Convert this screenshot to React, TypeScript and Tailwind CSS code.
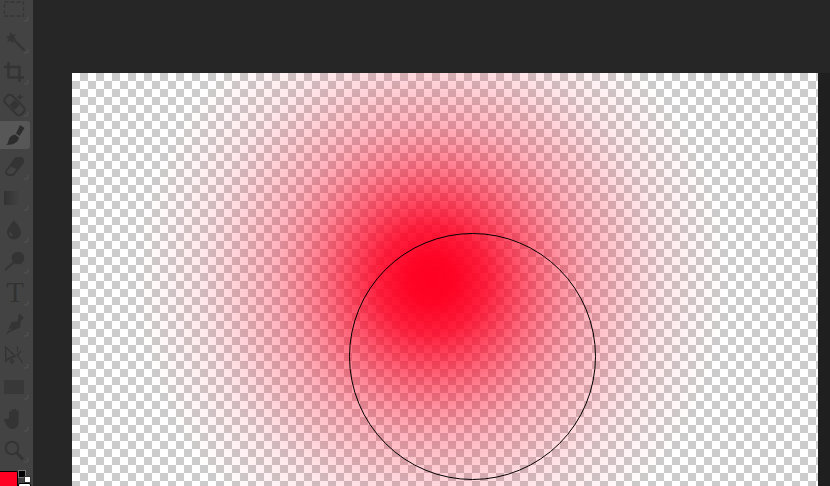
import type { ReactNode } from 'react';

const ICON = '#343434';

// corner flyout mark under each tool
function Tool({ active, children }: { active?: boolean; children: ReactNode }) {
  return (
    <div className="h-[31.5px] shrink-0 flex items-center">
      <div className={active ? 'w-[30px] h-7 rounded-r-[3px] bg-[#575757]' : 'w-[30px] h-7'}>
        <svg viewBox="0 0 30 28" width="30" height="28" className="block">
          {children}
          <path d="M28 22v2a2 2 0 0 1-2 2h-2" fill="none" stroke="#555555" strokeWidth="1" />
        </svg>
      </div>
    </div>
  );
}

export default function App() {
  return (
    <div className="flex w-[830px] h-[486px] overflow-hidden bg-[#262626]">
      {/* toolbar */}
      <div className="w-[33px] shrink-0 bg-[#434343] flex flex-col -mt-[6.75px] h-[493px]">
        <Tool>
          <rect x="4.5" y="7" width="19" height="14" fill="none" stroke="#363636" strokeWidth="1.3" strokeDasharray="4 2" />
        </Tool>
        <Tool>
          <path d="M11 4.500l1.200 3.600 3.600-1-1.900 3.200 2.800 2-3.600.4-.2 3.500-2.400-2.700-3.200 1.500 1.300-3.400-3-2.100 3.600-.3z" fill={ICON} />
          <path d="M14 13l10.500 10.500" stroke={ICON} strokeWidth="2" />
        </Tool>
        <Tool>
          <path d="M8.500 4v15.500H24M4 9h15.500v15" fill="none" stroke={ICON} strokeWidth="2.400" />
        </Tool>
        <Tool>
          <rect x="3" y="10" width="23" height="10" rx="3.500" transform="rotate(45 14.500 15)" fill="none" stroke={ICON} strokeWidth="2" />
          <rect x="11" y="11.500" width="7" height="7" transform="rotate(45 14.500 15)" fill={ICON} />
          <path d="M20 3.500l1 2.500 2.500 1-2.500 1-1 2.500-1-2.500-2.500-1 2.500-1z" fill={ICON} />
        </Tool>
        <Tool active>
          <path d="M20 4l4.500 3-5 8-3.500-2.500z" fill="#2c2c2c" />
          <path d="M15 13.500l4 3c-.5 4-4.500 7.500-13 7.500 3-2 2-4.500 3.500-7 1-1.700 3.500-3 5.500-3.500z" fill="#2c2c2c" />
        </Tool>
        <Tool>
          <path d="M17 5h3.500a3 3 0 0 1 2.300 4.800l-8.500 11a3 3 0 0 1-2.300 1.200H9a3 3 0 0 1-2.300-4.800l8-10.800A3 3 0 0 1 17 5z" fill="none" stroke={ICON} strokeWidth="1.800" />
          <path d="M17 5h3.500a3 3 0 0 1 2.300 4.800l-5.300 6.700-7-3 4.300-6.800A3 3 0 0 1 17 5z" fill={ICON} />
        </Tool>
        <Tool>
          <defs>
            <linearGradient id="grad-tool" x1="0" x2="1" y1="0" y2="0">
              <stop offset="0" stopColor="#323232" />
              <stop offset="1" stopColor="#454545" />
            </linearGradient>
          </defs>
          <rect x="4" y="7" width="18" height="14" fill="url(#grad-tool)" />
        </Tool>
        <Tool>
          <path d="M14 4c1.500 3 7 7 7 12.500a7 7 0 0 1-14 0C7 11 12.500 7 14 4z" fill={ICON} />
          <path d="M10 16.500a3 3 0 0 0 2.500 3" fill="none" stroke="#474747" strokeWidth="1.300" />
        </Tool>
        <Tool>
          <circle cx="18" cy="11" r="6.300" fill={ICON} />
          <path d="M13.500 15.500L5 23" stroke={ICON} strokeWidth="1.800" />
        </Tool>
        <div className="h-[31.5px] shrink-0 relative">
          <div className="w-[30px] h-[31.5px] flex items-center justify-center font-['Liberation_Serif',serif] text-[29px] leading-none text-[#323232]">
            T
          </div>
          <svg viewBox="0 0 30 28" width="30" height="28" className="absolute left-0 top-[2px]">
            <path d="M28 22v2a2 2 0 0 1-2 2h-2" fill="none" stroke="#555555" strokeWidth="1" />
          </svg>
        </div>
        <Tool>
          <path d="M19 3.500l5 4.500-3 2.500-1 7-11 5-3 2.500 3-3.800 2.500-1.200-.5-1.500-1.500.5-.8 2.500-2.200 3 5-12.500 6-.5z" fill={ICON} />
        </Tool>
        <Tool>
          <path d="M5.500 5l10 9.500-4.500.5 2.500 5-2 1-2.500-5-3 3z" fill="none" stroke={ICON} strokeWidth="1.400" />
          <path d="M17.500 4v6M17.500 13l5 8M21 9l-3.500 4" fill="none" stroke={ICON} strokeWidth="1.200" />
          <rect x="16.500" y="11.500" width="2" height="2" fill={ICON} />
        </Tool>
        <Tool>
          <rect x="4" y="7" width="20" height="14" fill="#383838" />
        </Tool>
        <Tool>
          <path d="M9 13V7.500a1.200 1.200 0 0 1 2.400 0V12V5.500a1.200 1.200 0 0 1 2.400 0V12V5a1.200 1.200 0 0 1 2.400 0v7V6.500a1.200 1.200 0 0 1 2.400 0V17c0 4-2.500 7-6 7-3 0-4.500-1.500-6-4l-2.500-4.500c-.6-1.300 1-2.200 2-1.200z" fill={ICON} />
        </Tool>
        <Tool>
          <circle cx="12" cy="12" r="6.300" fill="none" stroke={ICON} strokeWidth="2" />
          <path d="M17 17l6 6.500" stroke={ICON} strokeWidth="3" />
        </Tool>

        {/* colour swatches */}
        <div className="relative mt-[5px] h-[16px] shrink-0">
          <div className="w-[18px] h-[16px] bg-[#ff0022] border-t border-r border-black rounded-tr-[2px]" />
          <div className="absolute left-[18px] top-[-1px] w-[8px] h-[8px] bg-black border border-[#777]" />
          <div className="absolute left-[24px] top-[5px] w-[7px] h-[7px] bg-white border border-[#333]" />
          <div className="absolute left-[18px] top-[12px] w-[13px] h-[6px] bg-white border border-black rounded-t-[2px]" />
        </div>
      </div>

      {/* document area */}
      <div className="flex-1 pt-[73px] pl-[39px]">
        <div className="flex h-full">
          <div className="relative w-[746px] h-full overflow-hidden bg-[conic-gradient(#cccccc_25%,#ffffff_25%_50%,#cccccc_50%_75%,#ffffff_75%)] bg-[length:16px_16px]">
            <div className="absolute inset-0 bg-[radial-gradient(circle_300px_at_360px_207px,#ff0022_0%,#ff0022fa_8%,#ff0022de_18%,#ff0022b3_27%,#ff00228a_36%,#ff002269_44%,#ff00224d_52%,#ff002238_61%,#ff002226_69%,#ff002217_77%,#ff00220d_86%,#ff002205_94%,#ff002200_100%)]" />
            <div className="absolute left-[277px] top-[160px] w-[247px] h-[247px] rounded-full border border-black" />
          </div>
          <div className="flex-1 bg-[#1f1f1f]" />
        </div>
      </div>
    </div>
  );
}
